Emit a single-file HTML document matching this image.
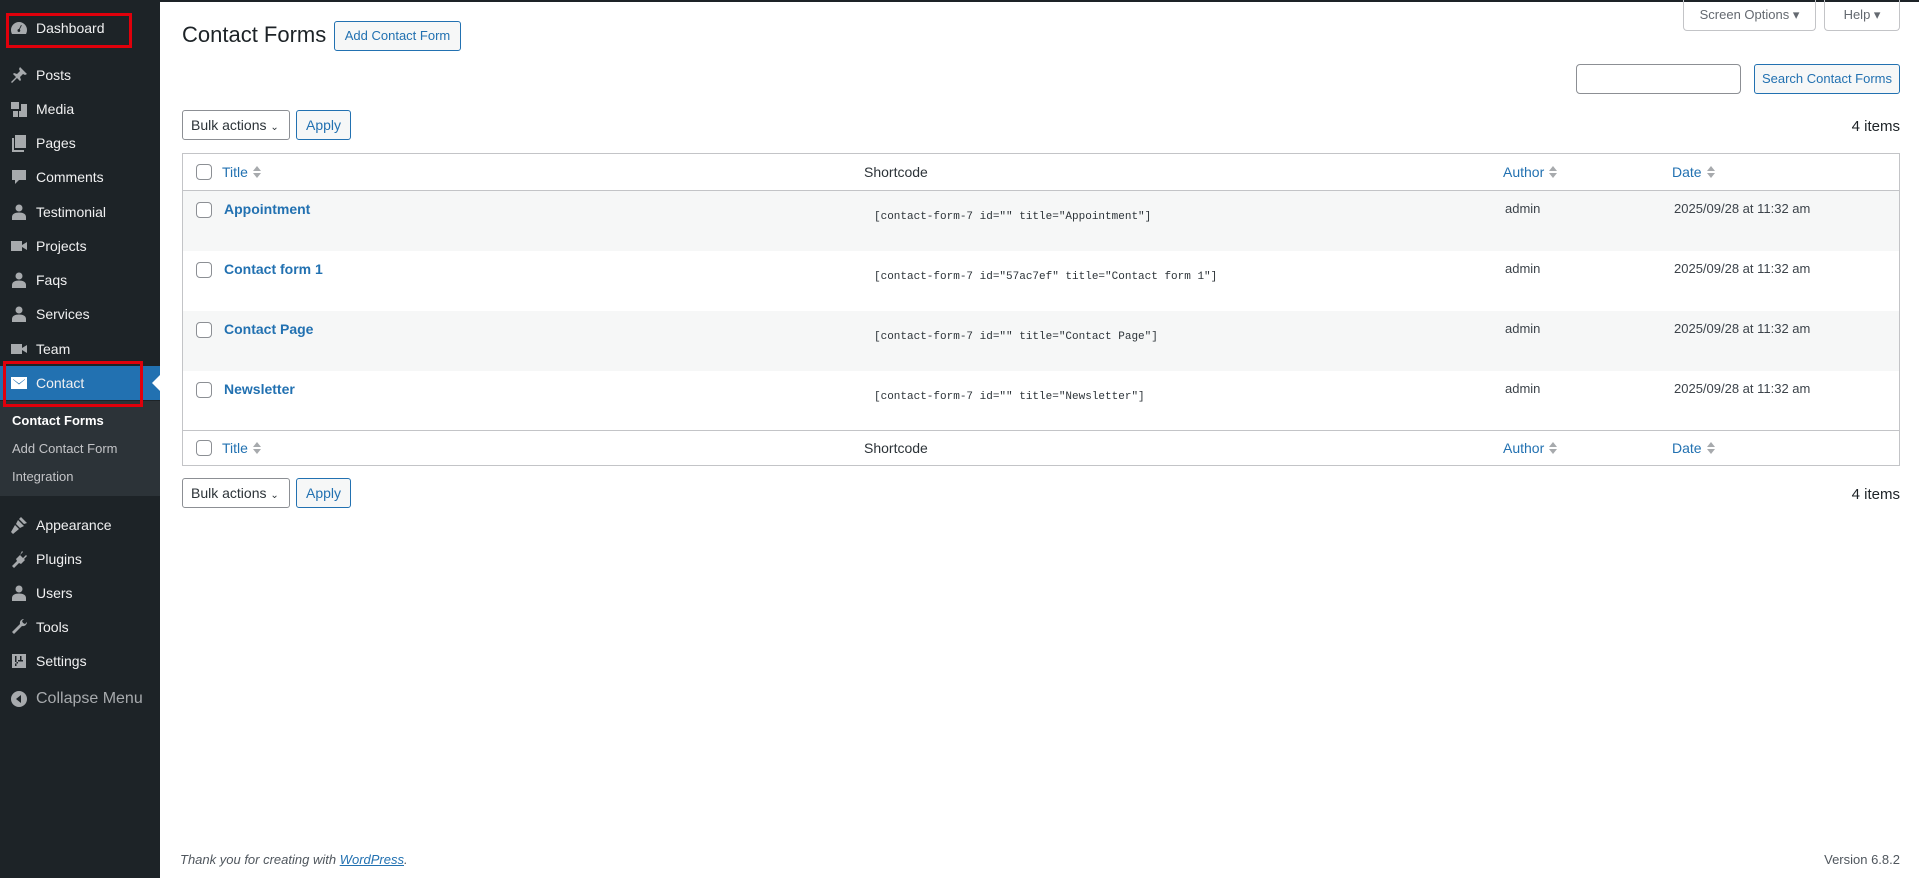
<!DOCTYPE html>
<html><head><meta charset="utf-8"><style>
*{box-sizing:border-box;margin:0;padding:0}
body{width:1919px;height:878px;overflow:hidden;background:#fff;font-family:"Liberation Sans",sans-serif;font-size:13px;color:#3c434a;position:relative}
.topline{position:absolute;left:0;top:0;width:1919px;height:2px;background:#1d2327}
#side{position:absolute;left:0;top:0;width:160px;height:878px;background:#1d2327}
.mi{position:absolute;left:0;width:160px;height:34px;color:#f0f0f1;font-size:14px;line-height:34px;padding-left:36px}
.mi svg{position:absolute;left:9px;top:7px;width:20px;height:20px;fill:#a7aaad}
.act{background:#2271b1}
.act svg{fill:#fff}
.sub{position:absolute;left:0;top:401px;width:160px;height:95px;background:#2c3338}
.sub div{position:absolute;left:12px;font-size:13px;color:#c3c4c7}
.red{position:absolute;border:3px solid #e0000b}
.arrow{position:absolute;left:152px;top:375px;width:0;height:0;border-top:8px solid transparent;border-bottom:8px solid transparent;border-right:8px solid #fff}
.abs{position:absolute}
.btn{position:absolute;border:1px solid #2271b1;color:#2271b1;background:#f6f7f7;border-radius:3px;font-size:13px;text-align:center}
.sel{position:absolute;border:1px solid #8c8f94;border-radius:3px;background:#fff;color:#2c3338;font-size:14px;padding-left:8px}
.tb{position:absolute;left:182px;top:153px;width:1718px;height:313px;border:1px solid #c3c4c7}
.row{position:absolute;left:0;width:1716px}
.cb{position:absolute;left:13px;width:16px;height:16px;border:1px solid #8c8f94;border-radius:4px;background:#fff}
.lnk{color:#2271b1}
.t{font-weight:bold;font-size:14px;color:#2271b1;position:absolute;left:41px}
.sc{position:absolute;left:691px;font-family:"Liberation Mono",monospace;font-size:11px;color:#2c3338}
.au{position:absolute;left:1322px;font-size:13px}
.dt{position:absolute;left:1491px;font-size:13px}
.h{position:absolute;font-size:14px}
.sort{display:inline-block;width:10px;height:14px;vertical-align:-2px;margin-left:4px}
</style></head><body>
<div class="topline"></div>
<div id="side">
 <div class="mi" style="top:11px"><svg viewBox="0 0 20 20"><path d="M10 4a8 8 0 0 0-8 8c0 1.5.4 2.8 1 4h14c.6-1.2 1-2.5 1-4a8 8 0 0 0-8-8zm0 10a1.5 1.5 0 1 1 0-3l2-4 .8.4-2 4A1.5 1.5 0 0 1 10 14z"/></svg>Dashboard</div>
 <div class="mi" style="top:58px"><svg viewBox="0 0 20 20"><path d="M11 2l7 7-2 1-2-1-3 3 1 3-1 1-3-3-5 5-1-1 5-5-3-3 1-1 3 1 3-3-1-2z"/></svg>Posts</div>
 <div class="mi" style="top:92px"><svg viewBox="0 0 20 20"><path d="M2 3h8v7H2zM12 5h6v13h-8v-6h2zM4 12h5v6H4z"/></svg>Media</div>
 <div class="mi" style="top:126px"><svg viewBox="0 0 20 20"><path d="M6 2h11v13H6zM3 5h2v12h10v2H3z"/></svg>Pages</div>
 <div class="mi" style="top:160px"><svg viewBox="0 0 20 20"><path d="M3 3h14v10h-7l-4 4v-4H3z"/></svg>Comments</div>
 <div class="mi" style="top:195px"><svg viewBox="0 0 20 20"><circle cx="10" cy="6" r="3.5"/><path d="M3 18v-3c0-3 3-4.5 7-4.5s7 1.5 7 4.5v3z"/></svg>Testimonial</div>
 <div class="mi" style="top:229px"><svg viewBox="0 0 20 20"><path d="M2 5h11v10H2zM13 9l5-3v8l-5-3z"/></svg>Projects</div>
 <div class="mi" style="top:263px"><svg viewBox="0 0 20 20"><circle cx="10" cy="6" r="3.5"/><path d="M3 18v-3c0-3 3-4.5 7-4.5s7 1.5 7 4.5v3z"/></svg>Faqs</div>
 <div class="mi" style="top:297px"><svg viewBox="0 0 20 20"><circle cx="10" cy="6" r="3.5"/><path d="M3 18v-3c0-3 3-4.5 7-4.5s7 1.5 7 4.5v3z"/></svg>Services</div>
 <div class="mi" style="top:332px"><svg viewBox="0 0 20 20"><path d="M2 5h11v10H2zM13 9l5-3v8l-5-3z"/></svg>Team</div>
 <div class="mi act" style="top:366px"><svg viewBox="0 0 20 20"><path d="M2 4h16v12H2zm2 2v.5l6 5 6-5V6l-6 4.5z" fill-rule="evenodd"/></svg>Contact</div>
 <div class="arrow"></div>
 <div class="sub">
  <div style="top:12px;color:#fff;font-weight:bold">Contact Forms</div>
  <div style="top:40px">Add Contact Form</div>
  <div style="top:68px">Integration</div>
 </div>
 <div class="mi" style="top:508px"><svg viewBox="0 0 20 20"><path d="M12 2l6 6-3 1-5-5zM9 5l6 6-4 2-4-4zM6 10l4 4-6 5-2-2z"/></svg>Appearance</div>
 <div class="mi" style="top:542px"><svg viewBox="0 0 20 20"><path d="M13 2l1 1-3 3 3 3 3-3 1 1-3 3 1 1-4 4-2-1-5 5-2-2 5-5-1-2 4-4z"/></svg>Plugins</div>
 <div class="mi" style="top:576px"><svg viewBox="0 0 20 20"><circle cx="10" cy="6" r="3.5"/><path d="M3 18v-3c0-3 3-4.5 7-4.5s7 1.5 7 4.5v3z"/></svg>Users</div>
 <div class="mi" style="top:610px"><svg viewBox="0 0 20 20"><path d="M15 2a4 4 0 0 0-4 5l-8 8 2 2 8-8a4 4 0 0 0 5-4l-2 2-2-1-1-2 2-2z"/></svg>Tools</div>
 <div class="mi" style="top:644px"><svg viewBox="0 0 20 20"><path d="M3 3h14v14H3zm3 2v10h1.5V5zm5 0v4H9v1.5h5V9h-1.5V5zm-5 6v1.5h3V11z"/></svg>Settings</div>
 <div class="mi" style="top:682px;color:#a7aaad;font-size:16px"><svg viewBox="0 0 20 20"><circle cx="10" cy="10" r="8"/><path d="M12 6v8l-5-4z" fill="#1d2327"/></svg>Collapse Menu</div>
 <div class="red" style="left:6px;top:13px;width:126px;height:35px"></div>
 <div class="red" style="left:3px;top:361px;width:140px;height:46px"></div>
</div>

<div class="abs" style="left:182px;top:22px;font-size:22px;color:#1d2327">Contact Forms</div>
<div class="btn" style="left:334px;top:21px;width:127px;height:30px;line-height:28px">Add Contact Form</div>

<div class="abs" style="left:1683px;top:0;width:133px;height:31px;border:1px solid #c3c4c7;border-top:none;border-radius:0 0 4px 4px;text-align:center;line-height:30px;color:#646970">Screen Options ▾</div>
<div class="abs" style="left:1824px;top:0;width:76px;height:31px;border:1px solid #c3c4c7;border-top:none;border-radius:0 0 4px 4px;text-align:center;line-height:30px;color:#646970">Help ▾</div>

<div class="abs" style="left:1576px;top:64px;width:165px;height:30px;border:1px solid #8c8f94;border-radius:4px"></div>
<div class="btn" style="left:1754px;top:64px;width:146px;height:30px;line-height:28px">Search Contact Forms</div>

<div class="sel" style="left:182px;top:110px;width:108px;height:30px;line-height:28px">Bulk actions <span style="font-size:10px">&#8964;</span></div>
<div class="btn" style="left:296px;top:110px;width:55px;height:30px;line-height:28px;font-size:14px">Apply</div>
<div class="abs" style="right:19px;top:118px;font-size:15px;color:#1d2327">4 items</div>

<div class="tb">
 <div class="row" style="top:0;height:37px;border-bottom:1px solid #c3c4c7">
  <div class="cb" style="top:10px"></div>
  <div class="h lnk" style="left:39px;top:10px">Title<svg class="sort" viewBox="0 0 10 14"><path d="M5 1l4 5H1zM5 13l4-5H1z" fill="#a7aaad"/></svg></div>
  <div class="h" style="left:681px;top:10px;color:#2c3338">Shortcode</div>
  <div class="h lnk" style="left:1320px;top:10px">Author<svg class="sort" viewBox="0 0 10 14"><path d="M5 1l4 5H1zM5 13l4-5H1z" fill="#a7aaad"/></svg></div>
  <div class="h lnk" style="left:1489px;top:10px">Date<svg class="sort" viewBox="0 0 10 14"><path d="M5 1l4 5H1zM5 13l4-5H1z" fill="#a7aaad"/></svg></div>
 </div>
 <div class="row" style="top:37px;height:60px;background:#f6f7f7">
  <div class="cb" style="top:11px"></div><div class="t" style="top:10px">Appointment</div>
  <div class="sc" style="top:20px">[contact-form-7 id="" title="Appointment"]</div>
  <div class="au" style="top:10px">admin</div><div class="dt" style="top:10px">2025/09/28 at 11:32 am</div>
 </div>
 <div class="row" style="top:97px;height:60px">
  <div class="cb" style="top:11px"></div><div class="t" style="top:10px">Contact form 1</div>
  <div class="sc" style="top:20px">[contact-form-7 id="57ac7ef" title="Contact form 1"]</div>
  <div class="au" style="top:10px">admin</div><div class="dt" style="top:10px">2025/09/28 at 11:32 am</div>
 </div>
 <div class="row" style="top:157px;height:60px;background:#f6f7f7">
  <div class="cb" style="top:11px"></div><div class="t" style="top:10px">Contact Page</div>
  <div class="sc" style="top:20px">[contact-form-7 id="" title="Contact Page"]</div>
  <div class="au" style="top:10px">admin</div><div class="dt" style="top:10px">2025/09/28 at 11:32 am</div>
 </div>
 <div class="row" style="top:217px;height:59px">
  <div class="cb" style="top:11px"></div><div class="t" style="top:10px">Newsletter</div>
  <div class="sc" style="top:20px">[contact-form-7 id="" title="Newsletter"]</div>
  <div class="au" style="top:10px">admin</div><div class="dt" style="top:10px">2025/09/28 at 11:32 am</div>
 </div>
 <div class="row" style="top:276px;height:35px;border-top:1px solid #c3c4c7">
  <div class="cb" style="top:9px"></div>
  <div class="h lnk" style="left:39px;top:9px">Title<svg class="sort" viewBox="0 0 10 14"><path d="M5 1l4 5H1zM5 13l4-5H1z" fill="#a7aaad"/></svg></div>
  <div class="h" style="left:681px;top:9px;color:#2c3338">Shortcode</div>
  <div class="h lnk" style="left:1320px;top:9px">Author<svg class="sort" viewBox="0 0 10 14"><path d="M5 1l4 5H1zM5 13l4-5H1z" fill="#a7aaad"/></svg></div>
  <div class="h lnk" style="left:1489px;top:9px">Date<svg class="sort" viewBox="0 0 10 14"><path d="M5 1l4 5H1zM5 13l4-5H1z" fill="#a7aaad"/></svg></div>
 </div>
</div>

<div class="sel" style="left:182px;top:478px;width:108px;height:30px;line-height:28px">Bulk actions <span style="font-size:10px">&#8964;</span></div>
<div class="btn" style="left:296px;top:478px;width:55px;height:30px;line-height:28px;font-size:14px">Apply</div>
<div class="abs" style="right:19px;top:486px;font-size:15px;color:#1d2327">4 items</div>

<div class="abs" style="left:180px;top:852px;font-style:italic;font-size:13px;color:#50575e">Thank you for creating with <span style="color:#2271b1;text-decoration:underline">WordPress</span>.</div>
<div class="abs" style="right:19px;top:852px;font-size:13px;color:#50575e">Version 6.8.2</div>
</body></html>
